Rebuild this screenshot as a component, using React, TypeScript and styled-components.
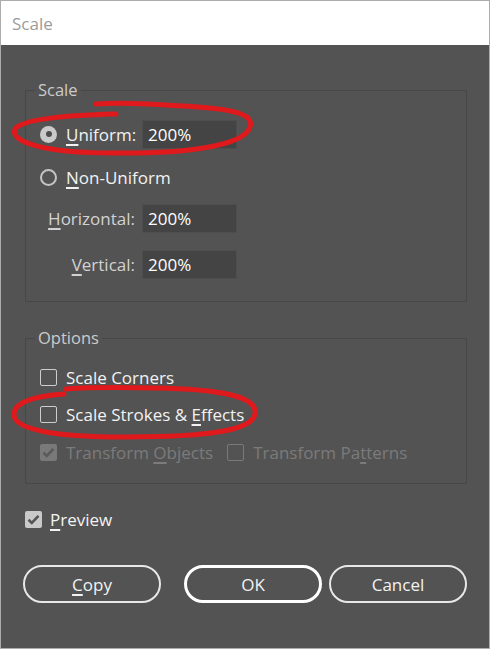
import React from "react";
import styled, { createGlobalStyle, css } from "styled-components";

const Global = createGlobalStyle`
  html, body { margin: 0; padding: 0; background: #535353; }
  * { box-sizing: border-box; }
`;

const FONT = `"Open Sans", "Noto Sans", "Liberation Sans", sans-serif`;

const Window = styled.div`
  position: relative;
  width: 490px;
  height: 649px;
  border: 1px solid #acacac;
  background: #535353;
  font-family: ${FONT};
  font-size: 17px;
  color: #f0f0f0;
  overflow: hidden;
`;

const TitleBar = styled.div`
  height: 44px;
  background: #ffffff;
  display: flex;
  align-items: center;
  padding-left: 11px;
  font-size: 17px;
  color: #9b9b9b;
`;

const Body = styled.div`
  padding: 0 22px 0 24px;
`;

const Group = styled.fieldset<{ $top: number; $pt: number; $pb: number }>`
  margin: ${(p) => p.$top}px 0 0 0;
  padding: ${(p) => p.$pt}px 14px ${(p) => p.$pb}px 14px;
  border: 1px solid #474747;
  border-radius: 1px;
  min-width: 0;
  display: flex;
  flex-direction: column;
`;

const Legend = styled.legend`
  margin-left: -5px;
  padding: 0 3px;
  height: 20px;
  line-height: 20px;
  font-size: 16.5px;
  color: #cbcbcb;
`;

const Row = styled.div<{ $h: number; $mt?: number }>`
  display: flex;
  align-items: center;
  height: ${(p) => p.$h}px;
  margin-top: ${(p) => p.$mt ?? 0}px;
`;

const FieldLabel = styled.label`
  width: 102px;
  flex: none;
  display: flex;
  align-items: center;
  white-space: nowrap;
  color: #f2f2f2;
`;

const SideLabel = styled.label`
  width: 102px;
  flex: none;
  text-align: right;
  padding-right: 7px;
  white-space: nowrap;
  color: #d2d2d2;
`;

const Mn = styled.span`
  text-decoration: underline;
  text-decoration-thickness: 2px;
  text-underline-offset: 3px;
`;

const Radio = styled.span<{ $on?: boolean }>`
  width: 17px;
  height: 17px;
  border-radius: 50%;
  flex: none;
  margin-right: 9px;
  display: flex;
  align-items: center;
  justify-content: center;
  ${(p) =>
    p.$on
      ? css`
          background: #cacaca;
          &::after {
            content: "";
            width: 6px;
            height: 6px;
            border-radius: 50%;
            background: #4d4d4d;
          }
        `
      : css`
          border: 2px solid #c4c4c4;
        `}
`;

const Input = styled.div`
  width: 95px;
  height: 29px;
  background: #444444;
  border: 1px solid #4e4e4e;
  border-radius: 1px;
  display: flex;
  align-items: center;
  padding-left: 5px;
  color: #ffffff;
  font-size: 17px;
`;

const Check = styled.span<{ $on?: boolean; $dim?: boolean }>`
  width: 17px;
  height: 17px;
  flex: none;
  border-radius: 2px;
  margin-right: 9px;
  display: flex;
  align-items: center;
  justify-content: center;
  ${(p) =>
    p.$on
      ? css`
          background: ${p.$dim ? "#797979" : "#c9c9c9"};
        `
      : css`
          border: 1.5px solid ${p.$dim ? "#7a7a7a" : "#cdcdcd"};
        `}
`;

const CheckText = styled.span<{ $dim?: boolean }>`
  color: ${(p) => (p.$dim ? "#7b7b7b" : "#f2f2f2")};
  white-space: nowrap;
`;

const CheckItem = styled.label<{ $ml?: number }>`
  display: flex;
  align-items: center;
  margin-left: ${(p) => p.$ml ?? 0}px;
`;

const PreviewRow = styled.div`
  display: flex;
  align-items: center;
  height: 24px;
  margin-top: 23px;
  & ${Check} {
    margin-right: 8px;
  }
`;

const Buttons = styled.div`
  display: flex;
  margin-top: 34px;
  margin-left: -2px;
`;

const Button = styled.button<{ $primary?: boolean; $ml?: number }>`
  width: 138px;
  height: 38px;
  margin-left: ${(p) => p.$ml ?? 0}px;
  border-radius: 19px;
  background: transparent;
  border: ${(p) => (p.$primary ? "3px solid #ffffff" : "2px solid #e8e8e8")};
  color: #f2f2f2;
  font-family: ${FONT};
  font-size: 17px;
  padding: 0;
`;

const Ink = styled.svg`
  position: absolute;
  inset: 0;
  pointer-events: none;
`;

const Tick: React.FC<{ color: string }> = ({ color }) => (
  <svg width="13" height="11" viewBox="0 0 13 11">
    <path d="M1.5 5.8 L4.8 9 L11.5 1.8" fill="none" stroke={color} strokeWidth="2.6" />
  </svg>
);

export default function App() {
  return (
    <>
      <Global />
      <Window>
        <TitleBar>Scale</TitleBar>
        <Body>
          <Group $top={35} $pt={19} $pb={22}>
            <Legend>Scale</Legend>
            <Row $h={30}>
              <FieldLabel>
                <Radio $on />
                <span>
                  <Mn>U</Mn>niform:
                </span>
              </FieldLabel>
              <Input>200%</Input>
            </Row>
            <Row $h={30} $mt={13}>
              <FieldLabel>
                <Radio />
                <span>
                  <Mn>N</Mn>on-Uniform
                </span>
              </FieldLabel>
            </Row>
            <Row $h={30} $mt={11}>
              <SideLabel>
                <Mn>H</Mn>orizontal:
              </SideLabel>
              <Input>200%</Input>
            </Row>
            <Row $h={30} $mt={16}>
              <SideLabel>
                <Mn>V</Mn>ertical:
              </SideLabel>
              <Input>200%</Input>
            </Row>
          </Group>

          <Group $top={26} $pt={17} $pb={19}>
            <Legend>Options</Legend>
            <Row $h={24}>
              <CheckItem>
                <Check />
                <CheckText>Scale Corners</CheckText>
              </CheckItem>
            </Row>
            <Row $h={24} $mt={13}>
              <CheckItem>
                <Check />
                <CheckText>
                  Scale Strokes &amp; <Mn>E</Mn>ffects
                </CheckText>
              </CheckItem>
            </Row>
            <Row $h={24} $mt={14}>
              <CheckItem>
                <Check $on $dim>
                  <Tick color="#5a5a5a" />
                </Check>
                <CheckText $dim>
                  Transform <Mn>O</Mn>bjects
                </CheckText>
              </CheckItem>
              <CheckItem $ml={14}>
                <Check $dim />
                <CheckText $dim>
                  Transform Pa<Mn>t</Mn>terns
                </CheckText>
              </CheckItem>
            </Row>
          </Group>

          <PreviewRow>
            <CheckItem>
              <Check $on>
                <Tick color="#555555" />
              </Check>
              <CheckText>
                <Mn>P</Mn>review
              </CheckText>
            </CheckItem>
          </PreviewRow>

          <Buttons>
            <Button>
              <Mn>C</Mn>opy
            </Button>
            <Button $primary $ml={23}>
              OK
            </Button>
            <Button $ml={7}>Cancel</Button>
          </Buttons>
        </Body>

        <Ink width="490" height="649" viewBox="0 0 490 649">
          <path
            d="M115 113 C75 114 22 117 14 128 C8 141 45 152 110 152 C185 153 243 145 249 126 C254 110 222 107 165 104 C135 102 108 102 95 103"
            fill="none"
            stroke="#e0191c"
            strokeWidth="5"
            strokeLinecap="round"
          />
          <path
            d="M63 393 C32 395 12 402 13 414 C14 429 55 436 125 436 C205 436 251 430 254 413 C257 396 222 388 152 387 C110 386 78 387 65 388"
            fill="none"
            stroke="#e0191c"
            strokeWidth="5"
            strokeLinecap="round"
          />
        </Ink>
      </Window>
    </>
  );
}
